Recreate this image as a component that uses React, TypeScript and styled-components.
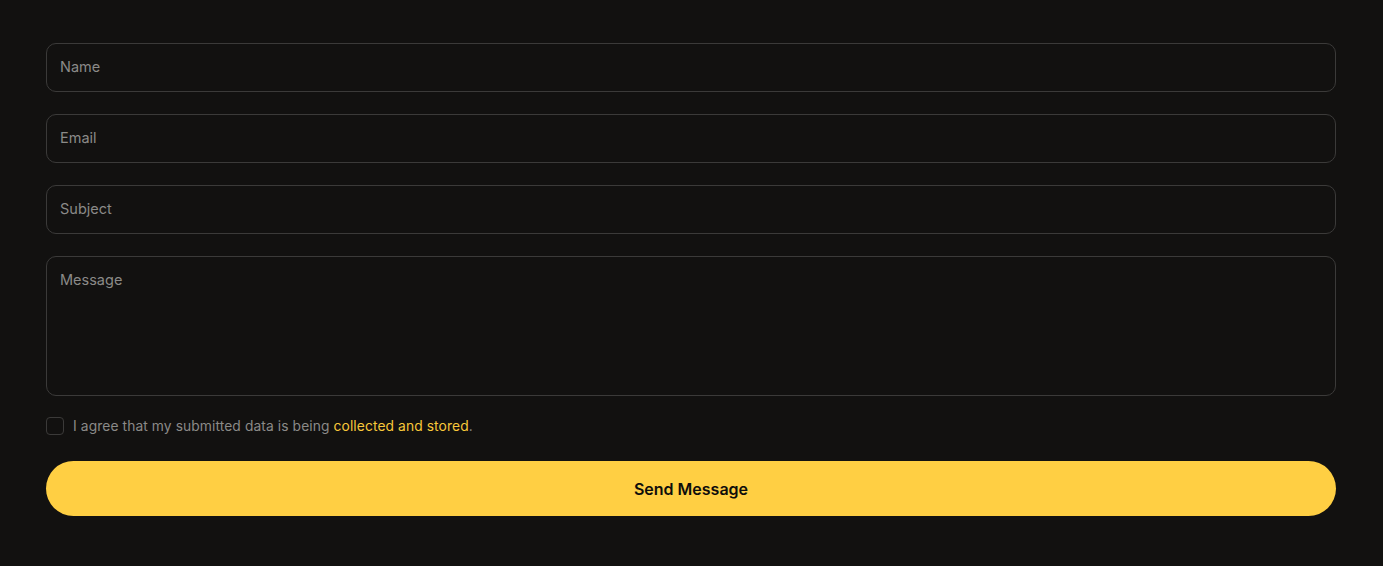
import styled, { createGlobalStyle } from "styled-components";

const Global = createGlobalStyle`
  html, body {
    margin: 0;
    padding: 0;
    background: #121110;
  }
  * { box-sizing: border-box; }
`;

const Page = styled.div`
  min-height: 566px;
  background: #121110;
  padding: 43px 47px 0 46px;
  font-family: "Inter", "Liberation Sans", sans-serif;
`;

const Form = styled.form`
  display: flex;
  flex-direction: column;
  gap: 22px;
`;

const Field = styled.input`
  height: 49px;
  width: 100%;
  background: transparent;
  border: 1px solid #3b3a39;
  border-radius: 10px;
  padding: 0 13px 2px;
  font-family: inherit;
  font-size: 14.5px;
  color: #ddd;
  outline: none;
  &::placeholder {
    color: #8b8a88;
  }
`;

const Area = styled.textarea`
  height: 140px;
  width: 100%;
  background: transparent;
  border: 1px solid #3b3a39;
  border-radius: 10px;
  padding: 13px 13px;
  font-family: inherit;
  font-size: 14.5px;
  line-height: 20px;
  color: #ddd;
  resize: none;
  outline: none;
  &::placeholder {
    color: #8b8a88;
  }
`;

const Agree = styled.label`
  display: flex;
  align-items: center;
  gap: 9px;
  margin-top: -1px;
  font-size: 13.8px;
  letter-spacing: 0.1px;
  color: #8b8a88;
`;

const Box = styled.span`
  width: 18px;
  height: 18px;
  border: 1px solid #3b3a39;
  border-radius: 4px;
  flex: none;
`;

const Highlight = styled.span`
  color: #f8c83a;
`;

const Send = styled.button`
  height: 55px;
  width: 100%;
  margin-top: 4px;
  border: none;
  border-radius: 28px;
  background: #ffcf43;
  color: #0e0d0b;
  font-family: inherit;
  font-size: 16px;
  font-weight: 600;
  cursor: pointer;
`;

export default function App() {
  return (
    <Page>
      <Global />
      <Form onSubmit={(e) => e.preventDefault()}>
        <Field placeholder="Name" />
        <Field placeholder="Email" />
        <Field placeholder="Subject" />
        <Area placeholder="Message" />
        <Agree>
          <Box />
          <span>
            I agree that my submitted data is being{" "}
            <Highlight>collected and stored</Highlight>.
          </span>
        </Agree>
        <Send type="submit">Send Message</Send>
      </Form>
    </Page>
  );
}
